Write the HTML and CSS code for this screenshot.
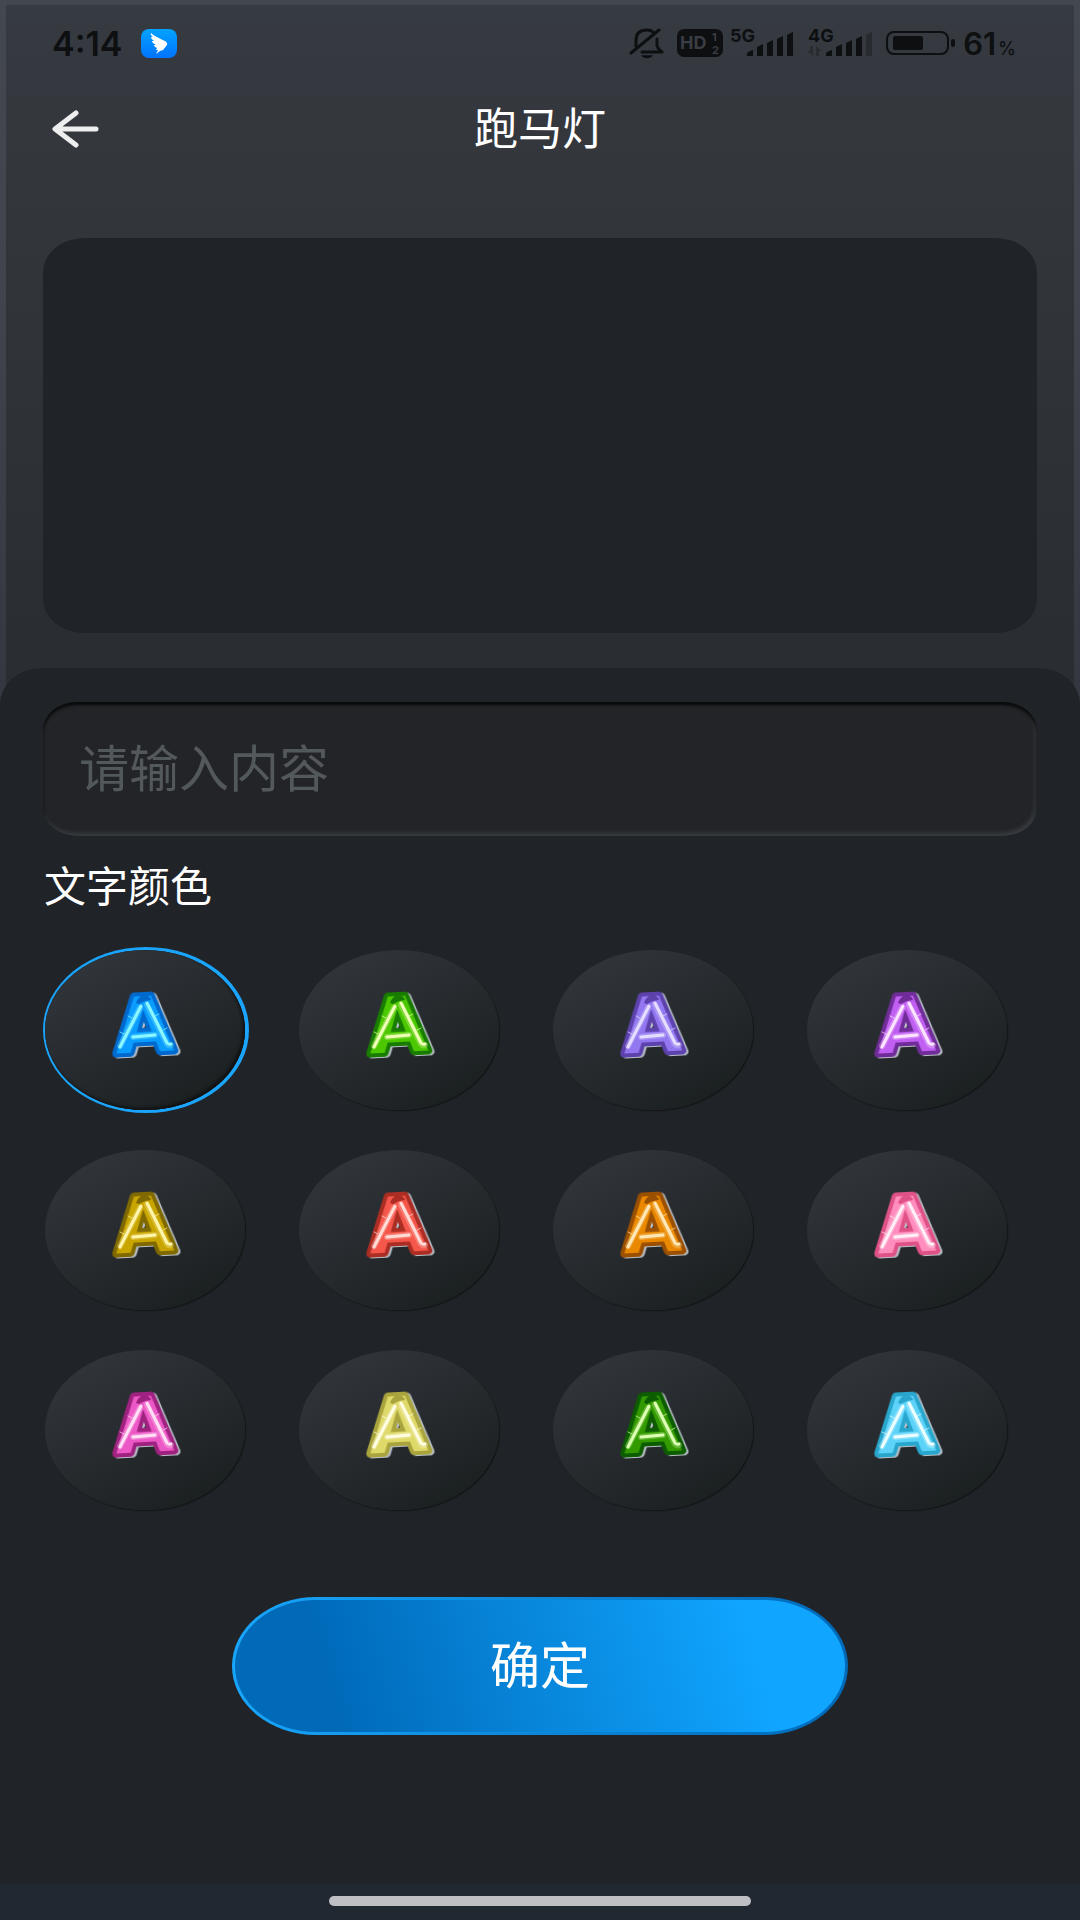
FILE: index.html
```html
<!DOCTYPE html>
<html lang="zh-CN">
<head>
    <meta charset="UTF-8">
    <meta name="viewport" content="width=device-width, initial-scale=1.0">
    <title>跑马灯</title>
    <link rel="stylesheet" href="styles.css">
</head>
<body>
    <!-- Shine on the balloon letters, shared by all colour swatches -->
    <svg class="sprite" aria-hidden="true">
        <symbol id="shine" viewBox="0 0 72 64">
            <path class="cap" d="M27 10Q30 2 36 2Q41 3 42 7L36 8L30 11Z"/>
            <path class="halo" d="M31 15L11 53M38 12L58 51Q60 53 62 52M24 44L46 42"/>
            <path class="streak" d="M32 13L11 54M38 10L58 50Q60 52 62 51M24 44L46 42"/>
            <path class="glint" d="M19 23l4 2M11 39l4 2M50 21l-4 2M58 35l-4 2"/>
        </symbol>
    </svg>

    <div class="phone">
        <div class="top">
            <!-- Status bar -->
            <div class="status-bar">
                <span class="time">4:14</span>
                <svg class="app-badge" width="36" height="29" viewBox="0 0 36 29">
                    <defs>
                        <linearGradient id="badgeFill" x1="0" y1="0" x2="0" y2="1">
                            <stop offset="0" stop-color="#03a3ff"/>
                            <stop offset="1" stop-color="#0073ff"/>
                        </linearGradient>
                    </defs>
                    <rect width="36" height="29" rx="8" fill="url(#badgeFill)"/>
                    <path fill="#fff" d="M10 4Q13 7 24 12Q27 14 26 16L22 21L19 22L15 25L17 21L15 21L16 19Q13 18 13 16L15 16Q11 14 11 12L13 12Q10 10 10 8L12 8Q9 6 10 4Z"/>
                </svg>
                <div class="status-right">
                    <svg width="35" height="31" viewBox="0 0 35 31" fill="none" stroke="#0d0f11" stroke-width="3" stroke-linecap="round" stroke-linejoin="round">
                        <path d="M2 25L30 2"/>
                        <path d="M7 18V12Q7 2 18 2Q22 2 24 4M28 11V17Q28 20 33 24H13"/>
                        <path d="M13 28Q18 32 23 28Z" stroke-width="1" fill="#0d0f11"/>
                    </svg>
                    <svg width="46" height="28" viewBox="0 0 46 28">
                        <rect width="46" height="28" rx="7" fill="#0d0f11"/>
                        <g fill="#3a3e44" font-weight="700">
                            <text x="3" y="20" font-size="18">HD</text>
                            <text x="35" y="12" font-size="11">1</text>
                            <text x="35" y="25" font-size="11">2</text>
                        </g>
                    </svg>
                    <svg class="signal" width="64" height="28" viewBox="0 0 64 28" fill="#0d0f11">
                        <text x="0" y="13">5G</text>
                        <path d="M17 27V24Q19 22 23 21V27ZM27 27V18L33 15V27ZM37 27V14L43 11V27ZM47 27V10L53 7V27ZM57 27V6L63 3V27Z"/>
                    </svg>
                    <svg class="signal second" width="66" height="28" viewBox="0 0 66 28" fill="#0d0f11">
                        <text x="1" y="13">4G</text>
                        <path d="M0 22H3V17H6V27ZM9 27V17L15 22H12V27Z" opacity=".3"/>
                        <path d="M19 27V24Q21 22 25 21V27ZM29 27V18L35 15V27ZM39 27V14L45 11V27ZM49 27V10L55 7V27Z"/>
                        <path d="M59 27V6L65 3V27Z" opacity=".35"/>
                    </svg>
                    <svg class="battery" width="70" height="24" viewBox="0 0 70 24">
                        <rect x="1" y="1" width="61" height="22" rx="7" fill="none" stroke="#0d0f11" stroke-width="2"/>
                        <rect x="7" y="5" width="30" height="14" rx="2" fill="#0d0f11"/>
                        <rect x="65" y="8" width="4" height="8" rx="2" fill="#0d0f11"/>
                    </svg>
                    <span class="percent">61<small>%</small></span>
                </div>
            </div>

            <!-- Title bar -->
            <header>
                <button class="back" type="button" aria-label="返回">
                    <svg width="47" height="38" viewBox="0 0 47 38" fill="none" stroke="#eee" stroke-width="5" stroke-linecap="round" stroke-linejoin="round">
                        <path d="M24 3L3 19L24 35M4 19H44"/>
                    </svg>
                </button>
                <h1>跑马灯</h1>
            </header>

            <div class="preview"></div>
        </div>

        <main class="sheet">
            <input class="content-input" type="text" placeholder="请输入内容" aria-label="请输入内容">

            <fieldset>
                <legend>文字颜色</legend>
                <div class="colors">
                    <label class="swatch blue"><input type="radio" name="color" aria-label="蓝色" checked><svg viewBox="0 0 72 64"><text x="35" y="59">A</text><use href="#shine"/></svg></label>
                    <label class="swatch green"><input type="radio" name="color" aria-label="绿色"><svg viewBox="0 0 72 64"><text x="35" y="59">A</text><use href="#shine"/></svg></label>
                    <label class="swatch purple"><input type="radio" name="color" aria-label="紫色"><svg viewBox="0 0 72 64"><text x="35" y="59">A</text><use href="#shine"/></svg></label>
                    <label class="swatch violet"><input type="radio" name="color" aria-label="紫红色"><svg viewBox="0 0 72 64"><text x="35" y="59">A</text><use href="#shine"/></svg></label>
                    <label class="swatch gold"><input type="radio" name="color" aria-label="金色"><svg viewBox="0 0 72 64"><text x="35" y="59">A</text><use href="#shine"/></svg></label>
                    <label class="swatch red"><input type="radio" name="color" aria-label="红色"><svg viewBox="0 0 72 64"><text x="35" y="59">A</text><use href="#shine"/></svg></label>
                    <label class="swatch orange"><input type="radio" name="color" aria-label="橙色"><svg viewBox="0 0 72 64"><text x="35" y="59">A</text><use href="#shine"/></svg></label>
                    <label class="swatch pink"><input type="radio" name="color" aria-label="粉色"><svg viewBox="0 0 72 64"><text x="35" y="59">A</text><use href="#shine"/></svg></label>
                    <label class="swatch magenta"><input type="radio" name="color" aria-label="洋红色"><svg viewBox="0 0 72 64"><text x="35" y="59">A</text><use href="#shine"/></svg></label>
                    <label class="swatch lemon"><input type="radio" name="color" aria-label="浅黄色"><svg viewBox="0 0 72 64"><text x="35" y="59">A</text><use href="#shine"/></svg></label>
                    <label class="swatch forest"><input type="radio" name="color" aria-label="深绿色"><svg viewBox="0 0 72 64"><text x="35" y="59">A</text><use href="#shine"/></svg></label>
                    <label class="swatch cyan"><input type="radio" name="color" aria-label="青色"><svg viewBox="0 0 72 64"><text x="35" y="59">A</text><use href="#shine"/></svg></label>
                </div>
            </fieldset>

            <button class="confirm" type="button">确定</button>
        </main>

        <div class="home-bar"><span></span></div>
    </div>
</body>
</html>
```
FILE: styles.css
```css
* {
    box-sizing: border-box;
}

body {
    margin: 0;
    font-family: Inter, "Noto Sans CJK SC", sans-serif;
    color: #fff;
    background-color: #202327;
}

.sprite {
    position: absolute;
    width: 0;
    height: 0;
}

.phone {
    display: flex;
    flex-direction: column;
    min-height: 100vh;
}

/* Upper area, with a lighter frame round it */
.top {
    border: solid #41454e;
    border-width: 5px 6px 0;
    border-image: linear-gradient(#43474f, #40444d 40%, #333840) 1;
    background: linear-gradient(#363a41, #33373c 25%, #2a2d31 90%);
    padding: 0 37px 77px;
}

.status-bar {
    display: flex;
    align-items: center;
    height: 78px;
    padding: 0 21px 2px 9px;
    color: #0d0f11;
}

.time {
    font-size: 34px;
    font-weight: 600;
}

.app-badge {
    margin-left: 18px;
}

.status-right {
    display: flex;
    align-items: center;
    gap: 13px;
    margin-left: auto;
}

.signal {
    font-size: 18px;
    font-weight: 700;
    margin-left: -6px;
    overflow: visible;
}

.second,
.battery {
    margin-left: 0;
}

.percent {
    font-size: 31px;
    font-weight: 600;
    margin-left: -6px;
}

.percent small {
    font-size: 18px;
    font-weight: 500;
    margin-left: 2px;
}

/* Title bar */
header {
    display: grid;
    grid-template-columns: 1fr auto 1fr;
    align-items: center;
    height: 92px;
    padding: 0 9px;
}

.back {
    justify-self: start;
    display: flex;
    padding: 0;
    border: none;
    background: none;
    cursor: pointer;
}

h1 {
    margin: 0;
    font-size: 44px;
    font-weight: 400;
    line-height: 60px;
}

.preview {
    height: 395px;
    margin-top: 63px;
    border-radius: 42px / 34px;
    background-color: #202327;
}

/* Bottom sheet */
.sheet {
    flex: 1;
    display: flex;
    flex-direction: column;
    margin-top: -42px;
    padding: 34px 43px;
    border-radius: 42px 42px 0 0 / 36px 36px 0 0;
    background-color: #202327;
}

.content-input {
    width: 100%;
    height: 134px;
    padding: 0 36px;
    border: none;
    border-radius: 34px / 28px;
    outline: none;
    background-color: #232427;
    box-shadow: inset 0 3px 3px #08090a, inset -2px -3px 4px #393d41;
    color: #fff;
    font-family: inherit;
    font-size: 50px;
}

.content-input::placeholder {
    color: #53585c;
}

fieldset {
    margin: 25px 0 0;
    padding: 0;
    border: none;
}

legend {
    padding: 0 1px;
    font-size: 42px;
    line-height: 52px;
}

.colors {
    display: grid;
    grid-template-columns: repeat(4, 1fr);
    gap: 40px 54px;
    margin: 37px 30px 0 2px;
}

/* Round colour buttons */
.swatch {
    display: flex;
    align-items: center;
    justify-content: center;
    height: 160px;
    padding-bottom: 10px;
    border-radius: 50%;
    background: linear-gradient(150deg, #31363c 8%, #282c30 45%, #1a1f20 90%);
    box-shadow: 1px 1px 1px #121314;
    cursor: pointer;
}

.swatch input {
    position: absolute;
    opacity: 0;
}

.swatch:has(:checked) {
    box-shadow: inset -2px -2px 3px #101112, 1px 0 0 3px #1aa4fb;
}

.swatch svg {
    width: 72px;
    height: 64px;
    overflow: visible;
}

/* Balloon letter: dark rim, bright body, pale edge on the right */
.swatch text {
    font-family: "DejaVu Sans", sans-serif;
    font-size: 76px;
    font-weight: 700;
    text-anchor: middle;
    fill: var(--main);
    stroke: var(--dark);
    stroke-width: 8px;
    stroke-linejoin: round;
    paint-order: stroke;
    transform: rotate(-3deg);
    transform-origin: 36px 32px;
    filter: drop-shadow(2px 1px 0 #b9c0c8);
}

.cap {
    fill: var(--dark);
}

.halo,
.streak,
.glint {
    fill: none;
    stroke: var(--light);
    stroke-linecap: round;
}

.halo {
    stroke-width: 6px;
    opacity: 0.3;
}

.streak {
    stroke-width: 3px;
}

.glint {
    stroke-width: 1px;
    opacity: 0.7;
}

.blue { --dark: #0069cd; --main: #0a9cff; --light: #8cf8ff; }
.green { --dark: #187c00; --main: #4cc800; --light: #efffb8; }
.purple { --dark: #5d42ad; --main: #9277f0; --light: #e6deff; }
.violet { --dark: #702c98; --main: #c05ff2; --light: #fde4ff; }
.gold { --dark: #7f6900; --main: #c9a500; --light: #fff5ad; }
.red { --dark: #ab2d23; --main: #f5574b; --light: #ffdcd5; }
.orange { --dark: #9b4f00; --main: #ea8800; --light: #ffe8b8; }
.pink { --dark: #df5288; --main: #ff8dbd; --light: #ffeff6; }
.magenta { --dark: #9f2280; --main: #ec58c5; --light: #ffe0f6; }
.lemon { --dark: #a9a43d; --main: #dfd96a; --light: #fffde2; }
.forest { --dark: #0c5c00; --main: #339a00; --light: #dcffb4; }
.cyan { --dark: #29a6cc; --main: #5dd3fa; --light: #ecffff; }

.confirm {
    align-self: center;
    width: 62%;
    height: 138px;
    margin-top: 87px;
    padding: 0 0 8px;
    border: 3px solid transparent;
    border-radius: 84px / 50%;
    background:
        linear-gradient(74deg, #0069b8 16%, #10a5ff 84%) padding-box,
        linear-gradient(90deg, #18a6fb, #0069b8) border-box;
    color: #fff;
    font-family: inherit;
    font-size: 50px;
    cursor: pointer;
}

/* Gesture bar */
.home-bar {
    display: flex;
    justify-content: center;
    padding: 12px 0 14px;
    background-color: #212831;
}

.home-bar span {
    width: 39%;
    height: 10px;
    border-radius: 5px;
    background-color: #bfbfc4;
}
```
